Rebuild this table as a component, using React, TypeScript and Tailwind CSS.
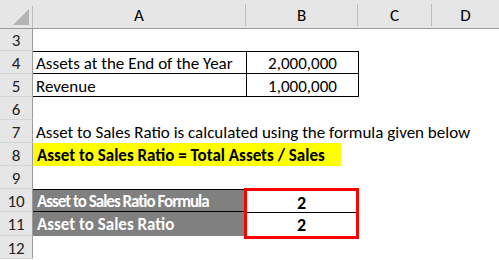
const font = { fontFamily: 'Carlito, Lato, "Open Sans", sans-serif' };

const RowNum = ({ n }: { n: number }) => (
  <div className="w-[33px] shrink-0 h-full flex items-center justify-center pt-[2px] bg-[#e6e6e6] border-r border-r-[#9b9b9b] border-b border-b-[#d4d4d4] text-[17px] text-[#222]">
    {n}
  </div>
);

export default function App() {
  return (
    <div className="w-[499px] h-[260px] overflow-hidden bg-white text-[17px] text-black leading-none" style={font}>
      {/* column header */}
      <div className="flex h-[29px] bg-[#e6e6e6] border-b border-b-[#9b9b9b]">
        <div className="w-[33px] shrink-0 flex items-end justify-end pb-[3px] pr-[3px] border-r border-r-[#bcbcbc] mt-[6px]">
          <svg width="16" height="16" viewBox="0 0 16 16">
            <polygon points="16,0 16,16 0,16" fill="#b4b4b4" />
          </svg>
        </div>
        <div className="w-[213px] shrink-0 flex items-center justify-center border-r border-r-[#bcbcbc] mt-[6px] -translate-y-[2px] text-[17px]">A</div>
        <div className="w-[112px] shrink-0 flex items-center justify-center border-r border-r-[#bcbcbc] mt-[6px] -translate-y-[2px] text-[17px]">B</div>
        <div className="w-[74px] shrink-0 flex items-center justify-center border-r border-r-[#bcbcbc] mt-[6px] -translate-y-[2px] text-[17px]">C</div>
        <div className="flex-1 flex items-center justify-center mt-[6px] -translate-y-[2px] text-[17px]">D</div>
      </div>

      {/* row 3 */}
      <div className="flex h-[22px]">
        <RowNum n={3} />
      </div>

      {/* rows 4-5 bordered table */}
      <div className="flex h-[23px]">
        <RowNum n={4} />
        <div className="w-[213px] shrink-0 border-t border-b border-black flex items-center pl-[3px] pt-[2px]">Assets at the End of the Year</div>
        <div className="w-[113px] shrink-0 border border-black flex items-center justify-center pt-[2px]">2,000,000</div>
      </div>
      <div className="flex h-[23px]">
        <RowNum n={5} />
        <div className="w-[213px] shrink-0 border-b border-black flex items-center pl-[3px] pt-[2px]">Revenue</div>
        <div className="w-[113px] shrink-0 border-x border-b border-black flex items-center justify-center pt-[2px]">1,000,000</div>
      </div>

      <div className="flex h-[23px]">
        <RowNum n={6} />
      </div>

      <div className="flex h-[23px]">
        <RowNum n={7} />
        <div className="flex items-center pl-[3px] pt-[2px] whitespace-nowrap">Asset to Sales Ratio is calculated using the formula given below</div>
      </div>

      <div className="flex h-[23px]">
        <RowNum n={8} />
        <div className="w-[308px] shrink-0 bg-[#ffff00] flex items-center pl-[4px] pt-[2px] font-bold text-[17px] whitespace-nowrap">Asset to Sales Ratio = Total Assets / Sales</div>
      </div>

      <div className="flex h-[23px]">
        <RowNum n={9} />
      </div>

      {/* rows 10-11 */}
      <div className="flex h-[47px]">
        <div className="flex flex-col w-[33px] shrink-0">
          <div className="h-[23px]"><RowNum n={10} /></div>
          <div className="h-[24px]"><RowNum n={11} /></div>
        </div>
        <div className="w-[211px] shrink-0 flex flex-col bg-[#808080] text-white font-bold whitespace-nowrap overflow-hidden">
          <div className="h-[23px] border-t border-b border-black flex items-center pl-[4px] pt-[2px] text-[17px] tracking-[-1px]">Asset to Sales Ratio Formula</div>
          <div className="h-[24px] flex items-center pl-[4px] pt-[1px] text-[17px]">Asset to Sales Ratio</div>
        </div>
        <div className="w-[115px] shrink-0 flex flex-col border-[3px] border-[#ff0000] -mt-px h-[51px] font-bold text-[18px]">
          <div className="h-[22px] border-b border-black flex items-center justify-center pt-[2px]">2</div>
          <div className="flex-1 flex items-center justify-center pt-[1px]">2</div>
        </div>
      </div>

      <div className="flex h-[23px]">
        <RowNum n={12} />
      </div>
    </div>
  );
}
